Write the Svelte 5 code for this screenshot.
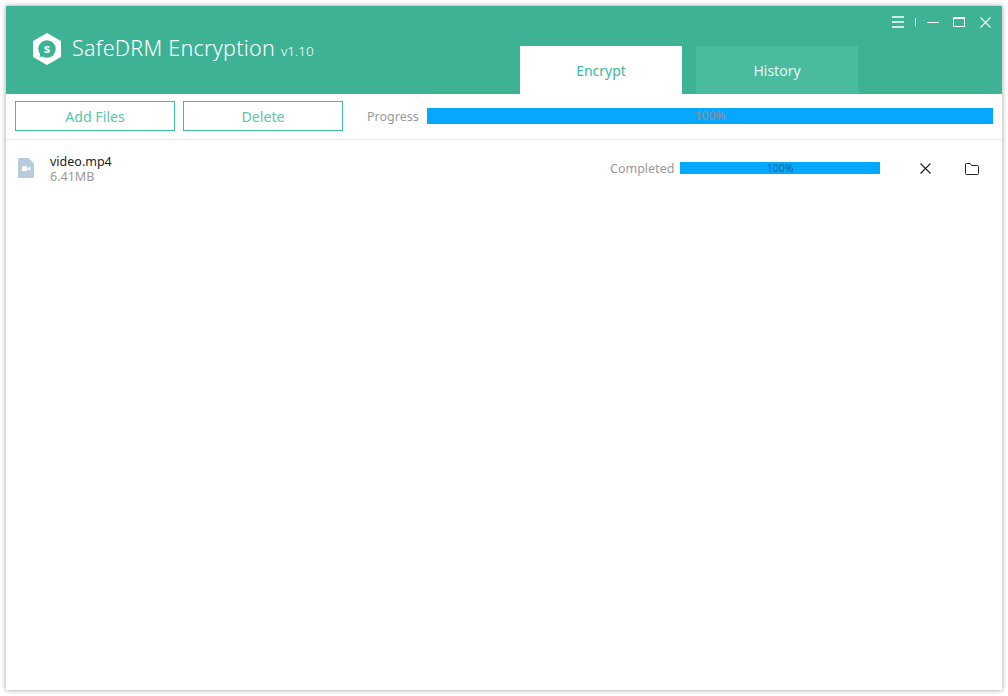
<script>
  const files = [{ name: 'video.mp4', size: '6.41MB', status: 'Completed', pct: 100 }];
</script>

<div class="page">
  <div class="window">
    <header class="header">
      <div class="brand">
        <svg class="logo" width="30" height="32" viewBox="0 0 30 32">
          <path d="M15 1 L28 8.5 V23.5 L15 31 L2 23.5 V8.5 Z" fill="#fff" stroke="#fff" stroke-width="2" stroke-linejoin="round"/>
          <circle cx="15" cy="16" r="8.7" fill="#3eb295"/>
          <path d="M8.6 19 L7.6 24 L12 23.2 Z" fill="#3eb295"/>
          <text x="15" y="20" text-anchor="middle" class="logo-s">s</text>
        </svg>
        <span class="title">SafeDRM Encryption</span>
        <span class="version">v1.10</span>
      </div>
      <nav class="tabs">
        <div class="tab active">Encrypt</div>
        <div class="tab">History</div>
      </nav>
      <div class="controls">
        <svg width="12" height="12" viewBox="0 0 12 12" class="menu"><path d="M0 1h12M0 6h12M0 11h12" stroke="#fff" stroke-opacity=".75" stroke-width="2"/></svg>
        <span class="sep"></span>
        <svg width="12" height="12" viewBox="0 0 12 12" class="min"><path d="M0 6.5h12" stroke="#fff" stroke-width="1"/></svg>
        <svg width="12" height="10" viewBox="0 0 12 10" class="max"><path d="M.5 1.5h11v8H.5z" fill="none" stroke="#fff"/><path d="M0 1h12" stroke="#fff" stroke-width="2"/></svg>
        <svg width="11" height="11" viewBox="0 0 11 11" class="close"><path d="M.5.5l10 10M10.5.5l-10 10" stroke="#fff" stroke-width="1.1"/></svg>
      </div>
    </header>

    <div class="toolbar">
      <button class="btn">Add Files</button>
      <button class="btn">Delete</button>
      <span class="plabel">Progress</span>
      <div class="bar big"><span>100%</span></div>
    </div>

    {#each files as f}
      <div class="row">
        <svg class="ficon" width="16" height="20" viewBox="0 0 16 20">
          <path d="M1.5 0H10.5L16 5.5V18.5A1.5 1.5 0 0 1 14.5 20H1.5A1.5 1.5 0 0 1 0 18.5V1.5A1.5 1.5 0 0 1 1.5 0Z" fill="#b9cbdb"/>
          <path d="M4 8.2h5.2v4.8H4zM9.8 10.2l2.4-1.6v4.2l-2.4-1.5z" fill="#fff"/>
        </svg>
        <div class="meta">
          <div class="name">{f.name}</div>
          <div class="size">{f.size}</div>
        </div>
        <span class="status">{f.status}</span>
        <div class="bar small"><span>{f.pct}%</span></div>
        <svg class="act-x" width="11" height="11" viewBox="0 0 11 11"><path d="M.5.5l10 10M10.5.5l-10 10" stroke="#222" stroke-width="1.1"/></svg>
        <svg class="act-f" width="14" height="12" viewBox="0 0 14 12"><path d="M.5 1.5a1 1 0 0 1 1-1h3.6l1.5 2h5.9a1 1 0 0 1 1 1v7a1 1 0 0 1-1 1h-11a1 1 0 0 1-1-1z" fill="none" stroke="#222"/></svg>
      </div>
    {/each}
  </div>
</div>

<style>
  :global(body) { margin: 0; background: #fff; }
  .page { width: 1008px; height: 696px; box-sizing: border-box; padding: 6px; font-family: "Noto Sans", "Open Sans", sans-serif; }
  .window { height: 684px; width: 996px; background: #fff; box-shadow: 0 0 5px rgba(0,0,0,.4); }
  .header { height: 88px; background: #3eb295; display: flex; align-items: flex-end; position: relative; }
  .brand { width: 514px; height: 88px; box-sizing: border-box; padding: 26px 0 0 26px; display: flex; align-items: baseline; color: #fff; }
  .logo { align-self: flex-start; margin: 1px 10px 0 0; }
  .logo-s { font-size: 13px; font-weight: 700; fill: #fff; }
  .title { font-size: 21.5px; line-height: 32px; font-weight: 300; letter-spacing: .25px; }
  .version { font-size: 13.5px; font-weight: 300; margin-left: 6px; }
  .tabs { display: flex; gap: 14px; }
  .tab { width: 162px; height: 48px; background: #49bc9f; color: #e4f5f0; font-size: 14px; line-height: 50px; text-align: center; }
  .tab.active { background: #fff; color: #3eb89b; }
  .controls { position: absolute; top: 10px; right: 11px; display: flex; align-items: center; }
  .sep { width: 1px; height: 8px; background: #fff; margin: 0 11px 0 11px; }
  .min { margin-right: 14px; }
  .max { margin-right: 15px; }
  .toolbar { height: 46px; box-sizing: border-box; border-bottom: 1px solid #e8e8e8; padding: 7px 9px 0 9px; display: flex; align-items: flex-start; }
  .btn { width: 160px; height: 30px; margin-right: 8px; padding: 1px 0 0; background: #fff; border: 1px solid #3ebd9f; color: #5cc5ab; font: inherit; font-size: 14.2px; line-height: 26px; }
  .plabel { margin-left: 16px; width: 60px; font-size: 12.5px; line-height: 32px; color: #999; }
  .bar { background: #06a8ff; text-align: center; }
  .big { flex: 1; height: 16px; margin-top: 7px; font-size: 12px; line-height: 16px; color: #a08c84; }
  .row { height: 56px; position: relative; display: flex; align-items: flex-start; padding: 0 0 0 12px; }
  .ficon { margin-top: 18px; margin-right: 16px; }
  .meta { width: 560px; padding-top: 14px; font-size: 12.5px; line-height: 15px; }
  .name { color: #222; }
  .size { color: #999; }
  .status { width: 70px; padding-top: 21px; font-size: 12.5px; line-height: 15px; color: #999; }
  .small { width: 200px; height: 12px; margin-top: 22px; font-size: 10.5px; line-height: 13px; color: #0c6a78; }
  .act-x { margin: 23px 0 0 40px; }
  .act-f { margin: 23px 0 0 34px; }
</style>
